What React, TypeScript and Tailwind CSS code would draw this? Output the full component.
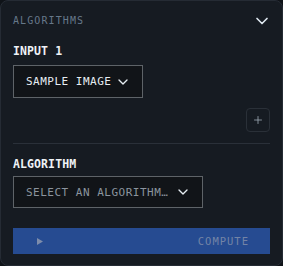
import { ChevronDown, Plus } from "lucide-react";

const mono = "font-['DejaVu_Sans_Mono','Liberation_Mono',monospace]";

function SelectBox({ label, width, muted = false }: { label: string; width: string; muted?: boolean }) {
  return (
    <button
      type="button"
      className={`flex items-center justify-between border border-[#5e6368] bg-[#111418] pl-[12px] pr-[11px] ${width} ${
        muted ? "text-[#8b949e]" : "text-[#e6edf3]"
      }`}
    >
      <span className="truncate text-[11px] leading-none tracking-[0.5px]">{label}</span>
      <ChevronDown size={16} strokeWidth={2} className="shrink-0 text-[#e6edf3]" />
    </button>
  );
}

export default function App() {
  return (
    <div className={`h-[266px] w-[283px] bg-[#0f1318] ${mono}`}>
      <section className="rounded-lg border border-[#252b34] bg-[#161b22] px-[12px] pt-[12px] pb-[11px]">
        <header className="flex h-[16px] items-center justify-between">
          <h2 className="text-[10px] leading-none tracking-[1.1px] text-[#66788a]">ALGORITHMS</h2>
          <ChevronDown size={20} strokeWidth={2} className="-mr-[2px] text-[#dfe8f0]" />
        </header>

        <div className="mt-[15px]">
          <div className="text-[11.5px] font-bold leading-[14px] tracking-[0.1px] text-[#eef2f6]">INPUT 1</div>
          <div className="mt-[7px]">
            <SelectBox label="SAMPLE IMAGE" width="h-[33px] w-[130px]" />
          </div>
          <div className="mt-[10px] flex justify-end">
            <button
              type="button"
              className="flex h-[24px] w-[24px] items-center justify-center rounded-[4px] border border-[#2a3038] text-[#a9b4bf]"
            >
              <Plus size={12} strokeWidth={1.5} />
            </button>
          </div>
        </div>

        <div className="mt-[11px] h-px bg-[#2a3039]" />

        <div className="mt-[13px]">
          <div className="text-[11.5px] font-bold leading-[14px] tracking-[0.1px] text-[#eef2f6]">ALGORITHM</div>
          <div className="mt-[5px]">
            <SelectBox label="SELECT AN ALGORITHM…" width="h-[32px] w-[190px]" muted />
          </div>
        </div>

        <button
          type="button"
          className="mt-[20px] flex h-[26px] w-full items-center justify-between bg-[#264b91] pl-[24px] pr-[21px]"
        >
          <svg width="6" height="7" viewBox="0 0 6 7" className="text-[#7d8cab]">
            <path d="M0 0L6 3.5L0 7Z" fill="currentColor" />
          </svg>
          <span className="text-[10.5px] leading-none tracking-[1px] text-[#7384a6]">COMPUTE</span>
        </button>
      </section>
    </div>
  );
}
